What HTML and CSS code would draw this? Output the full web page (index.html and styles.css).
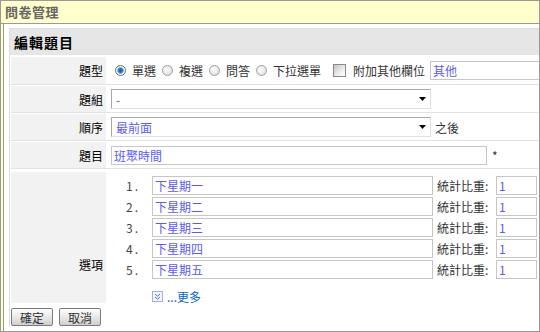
FILE: index.html
```html
<!DOCTYPE html>
<html lang="zh-Hant">
<head>
<meta charset="utf-8">
<title>問卷管理</title>
<link rel="stylesheet" href="styles.css">
</head>
<body>
<div class="panel">
  <div class="panel-head">問卷管理</div>
  <div class="panel-body">
    <div class="box">
      <div class="box-title">編輯題目</div>

      <div class="row row-type">
        <div class="label">題型</div>
        <div class="value">
          <span class="opt first"><span class="radio on"></span>單選</span>
          <span class="opt"><span class="radio"></span>複選</span>
          <span class="opt"><span class="radio"></span>問答</span>
          <span class="opt"><span class="radio"></span>下拉選單</span>
          <span class="opt opt-check"><span class="check"></span>附加其他欄位</span>
          <span class="field field-other">其他</span>
        </div>
      </div>

      <div class="row">
        <div class="label">題組</div>
        <div class="value">
          <div class="select"><span>-</span><svg class="arrow" width="7" height="4" viewBox="0 0 7 4"><path d="M0 0H7L3.5 4Z" fill="#000"/></svg></div>
        </div>
      </div>

      <div class="row">
        <div class="label">順序</div>
        <div class="value">
          <div class="select"><span>最前面</span><svg class="arrow" width="7" height="4" viewBox="0 0 7 4"><path d="M0 0H7L3.5 4Z" fill="#000"/></svg></div>
          <span class="after">之後</span>
        </div>
      </div>

      <div class="row">
        <div class="label">題目</div>
        <div class="value">
          <span class="field field-title">班聚時間</span>
          <span class="req">*</span>
        </div>
      </div>

      <div class="row row-options">
        <div class="label label-options">選項</div>
        <div class="value value-options">
          <div class="opt-line"><span class="num">1.</span><span class="field otext">下星期一</span><span class="wlabel">統計比重:</span><span class="field wval">1</span></div>
          <div class="opt-line"><span class="num">2.</span><span class="field otext">下星期二</span><span class="wlabel">統計比重:</span><span class="field wval">1</span></div>
          <div class="opt-line"><span class="num">3.</span><span class="field otext">下星期三</span><span class="wlabel">統計比重:</span><span class="field wval">1</span></div>
          <div class="opt-line"><span class="num">4.</span><span class="field otext">下星期四</span><span class="wlabel">統計比重:</span><span class="field wval">1</span></div>
          <div class="opt-line"><span class="num">5.</span><span class="field otext">下星期五</span><span class="wlabel">統計比重:</span><span class="field wval">1</span></div>
          <div class="more">
            <svg class="more-icon" width="11" height="11" viewBox="0 0 11 11"><rect x="0.5" y="0.5" width="10" height="10" fill="#f4f6ff" stroke="#9fb0e0"/><path d="M3 3L5.5 5.2L8 3M3 6L5.5 8.2L8 6" fill="none" stroke="#4a6fd0" stroke-width="1"/></svg>
            <span class="more-link">...更多</span>
          </div>
        </div>
      </div>

      <div class="buttons">
        <button class="btn">確定</button>
        <button class="btn">取消</button>
      </div>
    </div>
  </div>
</div>
</body>
</html>
```

FILE: styles.css
```css
* { box-sizing: border-box; }
body {
  margin: 0;
  font-family: "Noto Sans CJK TC", "Noto Sans", sans-serif;
  font-size: 12px;
}
.panel {
  width: 540px;
  height: 332px;
  border: 1px solid #999;
  background: #ffffcc;
  display: flex;
  flex-direction: column;
  overflow: hidden;
}
.panel-head {
  height: 23px;
  border-bottom: 1px solid #999;
  padding-left: 4px;
  font-size: 13px;
  font-weight: bold;
  color: #666;
  line-height: 22px;
  letter-spacing: 0.5px;
}
.panel-body {
  flex: 1;
  margin-left: 2px;
  border-left: 1px solid #999;
  background: #fff;
  padding: 4px 0 0 5px;
}
.box {
  border-left: 1px solid #ddd;
  border-top: 1px solid #ddd;
}
.box-title {
  height: 26px;
  background: #e6e6e6;
  font-size: 14px;
  font-weight: bold;
  color: #000;
  padding-left: 4px;
  line-height: 26px;
  letter-spacing: 1px;
}
.row {
  display: flex;
  margin-left: 1px;
  margin-top: 1px;
  height: 27px;
  border-bottom: 1px solid #e3e3e3;
}
.row-type {
  margin-top: 2px;
  height: 28px;
}
.row-options {
  margin-top: 3px;
  height: 131px;
  border-bottom: none;
}
.label {
  width: 95px;
  flex: none;
  background: #f2f2f2;
  display: flex;
  align-items: center;
  justify-content: flex-end;
  padding-right: 3px;
  color: #000;
}
.label-options {
  padding-top: 53px;
}
.value {
  flex: 1;
  min-width: 0;
  display: flex;
  align-items: center;
  padding-left: 5px;
  overflow: hidden;
  white-space: nowrap;
  color: #333;
}
.opt {
  display: inline-flex;
  align-items: center;
  gap: 6px;
  margin-right: 6px;
}
.opt.first { margin-left: 4px; }
.opt-check { margin-left: 6px; gap: 7px; margin-right: 5px; }
.radio {
  width: 11px;
  height: 11px;
  border-radius: 50%;
  border: 1px solid #a0a0a0;
  background: radial-gradient(circle at 40% 40%, #ffffff 0, #e6e6e6 60%, #cfcfcf 100%);
  flex: none;
}
.radio.on {
  border-color: #6a6a6a;
  background: radial-gradient(circle, #0e5a9a 0, #2a7cc0 2px, #6fb0e0 3px, #ffffff 3.6px, #e2e2e2 100%);
}
.check {
  width: 13px;
  height: 13px;
  border: 1px solid #8a8a8a;
  background: linear-gradient(135deg, #c4c4c4 0%, #eeeeee 60%, #ffffff 100%);
  flex: none;
}
.field {
  display: inline-block;
  height: 19px;
  border: 1px solid #c6c6c6;
  color: #5b5bf0;
  padding-left: 2px;
  line-height: 17px;
  flex: none;
  background: #fff;
}
.field-other {
  width: 150px;
}
.field-title {
  width: 376px;
}
.req {
  margin-left: 5px;
  color: #333;
}
.select {
  width: 320px;
  height: 20px;
  border: 1px solid;
  border-color: #a8a8a8 #dfe0e6 #dfe0e6 #a8a8a8;
  display: flex;
  align-items: center;
  justify-content: space-between;
  padding: 0 4px;
  color: #5b5bf0;
  flex: none;
}
.arrow { flex: none; }
.after {
  margin-left: 4px;
  color: #333;
}
.value-options {
  flex-direction: column;
  align-items: flex-start;
  padding: 4px 0 0 0;
}
.opt-line {
  display: flex;
  align-items: center;
  height: 19px;
  margin-bottom: 2px;
}
.num {
  width: 34px;
  text-align: right;
  color: #444;
  margin-right: 12px;
  letter-spacing: 2px;
}
.otext { width: 281px; }
.wlabel {
  margin-left: 4px;
  width: 56px;
  color: #333;
}
.wval {
  width: 41px;
  margin-left: 3px;
}
.more {
  display: flex;
  align-items: center;
  gap: 4px;
  margin-top: 9px;
  padding-left: 46px;
  height: 12px;
}
.more-icon { flex: none; }
.more-link {
  color: #0a66cc;
}
.buttons {
  display: flex;
  gap: 6px;
  padding-left: 1px;
  margin-top: 5px;
}
.btn {
  width: 42px;
  height: 18px;
  border: 1px solid #7a7a7a;
  border-radius: 2px;
  background: linear-gradient(#ffffff, #e4e4e4 60%, #cfcfcf);
  font-family: "Noto Sans CJK TC", "Noto Sans", sans-serif;
  font-size: 12px;
  color: #333;
  padding: 0;
  line-height: 15px;
}
```
